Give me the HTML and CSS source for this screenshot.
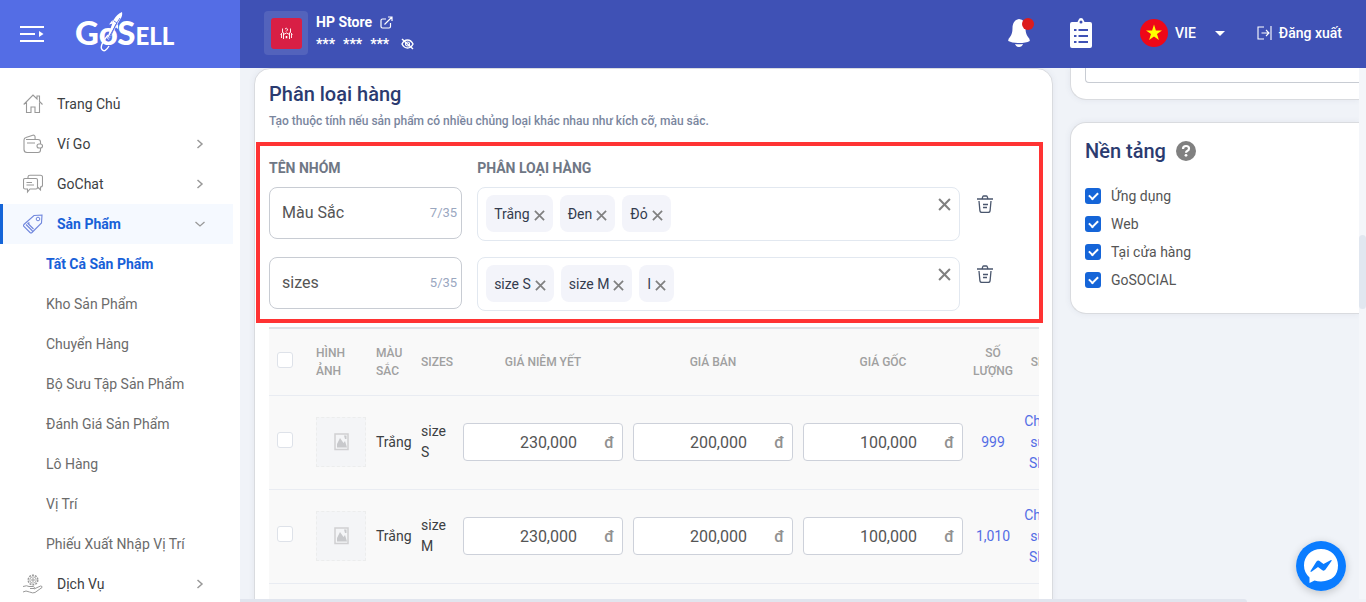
FILE: index.html
```html
<!DOCTYPE html>
<html lang="vi">
<head>
<meta charset="utf-8">
<title>GoSell</title>
<link rel="stylesheet" href="styles.css">
</head>
<body>
<svg class="defs" aria-hidden="true">
  <symbol id="x" viewBox="0 0 12 12"><path d="M1 1l10 10M11 1L1 11" fill="none" stroke="#808080" stroke-width="1.900"/></symbol>
  <symbol id="trash" viewBox="0 0 16 18"><path d="M0 4h16M5 4l.8-2.400Q6 1 6.800 1h2.400q.8 0 1 .6L11 4M2 6l.9 9.600Q3 17.500 5 17.500h6q2 0 2.100-1.900L14 6M6 9.500h5M6 12.500h4" fill="none" stroke="#4a566d" stroke-width="1.300"/></symbol>
  <symbol id="right" viewBox="0 0 12 12"><path d="M3.500 2l4.500 4-4.500 4" fill="none" stroke="#999" stroke-width="1.500"/></symbol>
  <symbol id="picture" viewBox="0 0 15 18"><rect x="1" y="1" width="13" height="15.500" fill="none" stroke="#d0d0d2" stroke-width="1.500"/><path d="M3 14.500V11l3-6 3.500 5 1.500-2L13 14.500z" fill="#c8c9cc"/><path d="M10 2.500h2.500v3.500H11z" fill="#c8c9cc"/></symbol>
</svg>

<header class="header">
  <div class="brand">
    <button class="plain" aria-label="Menu">
      <svg width="24" height="18" viewBox="0 0 24 18"><path d="M0 2h24M0 9h15M0 16h24" stroke="#fff" stroke-width="2"/><path d="M19 6v6l4.500-3z" fill="#fff"/></svg>
    </button>
    <a class="logo" href="#"><span class="logo-big">GoS</span><span class="logo-small">ELL</span>
      <svg class="rocket" width="26" height="42" viewBox="0 0 26 42"><path d="M23 0q1 4-2.500 8.500L10 28l-2-1.500L14.500 8Q18 2 23 0z" fill="#fff"/><path d="M21 6l-4.500 7-6.500 15M15 9l3 2-9 16" fill="none" stroke="#546de5" stroke-width=".9"/><path d="M13.500 8l-3.500 4.500 4-1zM19 12l0 5-2.500-2z" fill="#fff"/><path d="M9 23Q0 34 3 37.500 6 41 10 34" fill="none" stroke="#fff" stroke-width="1.400"/></svg>
    </a>
  </div>
  <div class="bar">
    <div class="store">
      <span class="store-logo"><svg width="31" height="31" viewBox="0 0 31 31"><rect width="31" height="31" rx="3" fill="#d81f45"/><g fill="none" stroke="#fff" stroke-width=".9"><path d="M11.500 10.500v4l-2 2M12.500 14.500v6.500M18.500 14.500v6.500M19.500 10.500v4l2 2M10.500 16v4M20.500 16v4M12.500 16.500q3-3 6 0M14 11q1.500-1.500 2.500 0 0 1.500-1.500 2.500"/></g><path d="M14.700 18h1.600v2.300h-1.600z" fill="#fff"/></svg></span>
      <div class="store-text">
        <a class="store-name" href="#">HP Store <svg width="13" height="13" viewBox="0 0 13 13"><path d="M6 3H2.500Q1 3 1 4.500v6Q1 12 2.500 12h6.500q1.500 0 1.500-1.500V7M4.500 8.500L12 1M8 1h4v4" fill="none" stroke="#fff" stroke-width="1.200"/></svg></a>
        <div class="balance"><span>***</span><span>***</span><span>***</span>
          <button class="plain eye" aria-label="Hiện số dư"><svg width="13" height="12" viewBox="0 0 13 12"><path d="M1 6q2-4 5.500-4T12 6q-2 4-5.500 4T1 6z" fill="none" stroke="#fff" stroke-width="1.400"/><circle cx="6.500" cy="6" r="2" fill="none" stroke="#fff" stroke-width="1.200"/><path d="M1 1l11 10" stroke="#fff" stroke-width="1.400"/></svg></button></div>
      </div>
    </div>
    <nav class="tools">
      <button class="plain" aria-label="Thông báo"><svg width="26" height="30" viewBox="0 0 26 30"><path d="M11 1C7 1.500 4.500 5 4.500 10q0 6-2.500 9-2 2-1.800 4Q4 25 11 25t10.800-2q.2-2-1.800-4-2.500-3-2.500-9Q17.500 1.500 11 1z" fill="#fff"/><path d="M7 26q4 .6 8 0-1 3-4 3t-4-3z" fill="#fff"/><circle cx="20" cy="6" r="6" fill="#dc1c1c"/></svg></button>
      <button class="plain" aria-label="Danh sách"><svg width="22" height="30" viewBox="0 0 22 30"><path d="M2 4h5.500q.5-1 1-2 .5-2 2.500-2t2.500 2q.5 1 1 2H20q2 0 2 2v22q0 2-2 2H2q-2 0-2-2V6q0-2 2-2z" fill="#fff"/><circle cx="11" cy="4" r="1.500" fill="#3f51b5"/><path d="M4 12h2.500M4 18h2.500M4 24h2.500M8.500 12H18M8.500 18H18M8.500 24H18" stroke="#3f51b5" stroke-width="2"/></svg></button>
      <button class="plain language"><svg width="28" height="28" viewBox="0 0 28 28"><circle cx="14" cy="14" r="14" fill="#ee0818"/><path d="M14 5.500l1.900 6h6.100l-5 3.600 1.900 5.900-4.900-3.600-4.900 3.600 1.900-5.900-5-3.600h6.100z" fill="#ff0"/></svg><span>VIE</span><svg class="caret" width="10" height="5" viewBox="0 0 10 5"><path d="M0 0h10L5 5z" fill="#fff"/></svg></button>
      <a class="logout" href="#"><svg width="15" height="14" viewBox="0 0 15 14"><path d="M7 1H1v12h6M14 0v14M4.500 7h7M9 4l3 3-3 3" fill="none" stroke="#fff" stroke-width="1.100"/></svg>Đăng xuất</a>
    </nav>
  </div>
</header>

<div class="page">
  <nav class="sidebar">
    <a class="item" href="#"><svg class="icon" viewBox="0 0 20 20"><path d="M.7 10.500L10 1l4 4V2h2.500v5.500l3 3M3.500 8.500V18.500h4.500V13h4v5.500h4.500V8.500" fill="none" stroke="#999" stroke-width="1.100"/></svg>Trang Chủ</a>
    <a class="item" href="#"><svg class="icon" viewBox="0 0 20 20"><path d="M3 5.500h12q2.500 0 2.500 2.500v2M17.500 14v2q0 2.500-2.500 2.500H4Q1 18.500 1 15.500V6q0-2 2-2.500L10.500 1q2 0 1.500 4.500M4 9h8M16 10h1.500q2 0 2 2t-2 2H16q-2 0-2-2t2-2z" fill="none" stroke="#999" stroke-width="1.100"/></svg>Ví Go<svg class="arrow"><use href="#right"/></svg></a>
    <a class="item" href="#"><svg class="icon" viewBox="0 0 20 20"><path d="M5 4V3q0-1.800 2-1.800h10.500q2 0 2 1.800v8q0 2-2 2v3l-3-3M2 4.500h11q1.500 0 1.500 1.500v7.500q0 1.500-1.500 1.500H7l-2.500 3V15H2Q.5 15 .5 13.500V6Q.5 4.500 2 4.500zM3.500 8.500H9M3.500 11H11" fill="none" stroke="#999" stroke-width="1.100"/></svg>GoChat<svg class="arrow"><use href="#right"/></svg></a>
    <a class="item current" href="#"><svg class="icon" viewBox="0 0 20 20"><path d="M11 1.500L19 1l-.5 8-9.500 9.500q-1 .8-2 0L.9 12.500q-.8-1 0-2zM3 10.500l6.500 6.500M4.500 9l6 6M5.500 8.300l1 1" fill="none" stroke="#6f86dd" stroke-width="1.100"/><circle cx="15" cy="5" r="1.800" fill="none" stroke="#6f86dd"/></svg>Sản Phẩm<svg class="arrow" viewBox="0 0 12 12"><path d="M1.500 4L6 8l4.500-4" fill="none" stroke="#999" stroke-width="1.300"/></svg></a>
    <a class="sub chosen" href="#">Tất Cả Sản Phẩm</a>
    <a class="sub" href="#">Kho Sản Phẩm</a>
    <a class="sub" href="#">Chuyển Hàng</a>
    <a class="sub" href="#">Bộ Sưu Tập Sản Phẩm</a>
    <a class="sub" href="#">Đánh Giá Sản Phẩm</a>
    <a class="sub" href="#">Lô Hàng</a>
    <a class="sub" href="#">Vị Trí</a>
    <a class="sub" href="#">Phiếu Xuất Nhập Vị Trí</a>
    <a class="item" href="#"><svg class="icon" viewBox="0 0 20 20"><g fill="none" stroke="#999"><circle cx="10" cy="6" r="4.800" stroke-width="1.400" stroke-dasharray="2 1"/><circle cx="10" cy="6" r="3.200" stroke-width=".8"/><circle cx="10" cy="6" r="1.200"/><path d="M0 12.500q4-1.500 6 0h4.500q1.500.5.500 2H7M11 15l6.500-3q2 0 1.500 1.500L12 18.500q-2 1-5.500-.5L3 17l-3 1"/></g></svg>Dịch Vụ<svg class="arrow"><use href="#right"/></svg></a>
  </nav>

  <main class="content">
    <div class="columns">
      <section class="card variations">
        <h2>Phân loại hàng</h2>
        <p class="hint">Tạo thuộc tính nếu sản phẩm có nhiều chủng loại khác nhau như kích cỡ, màu sắc.</p>
        <div class="groups">
          <span class="group-label">TÊN NHÓM</span><span class="group-label wide">PHÂN LOẠI HÀNG</span>
          <label class="name"><input type="text" value="Màu Sắc" aria-label="Tên nhóm 1"><span>7/35</span></label>
          <div class="tags">
            <span class="tag">Trắng<button class="plain" aria-label="Xóa Trắng"><svg><use href="#x"/></svg></button></span>
            <span class="tag">Đen<button class="plain" aria-label="Xóa Đen"><svg><use href="#x"/></svg></button></span>
            <span class="tag">Đỏ<button class="plain" aria-label="Xóa Đỏ"><svg><use href="#x"/></svg></button></span>
            <button class="plain clear" aria-label="Xóa tất cả"><svg><use href="#x"/></svg></button>
          </div>
          <button class="plain trash" aria-label="Xóa nhóm 1"><svg><use href="#trash"/></svg></button>
          <label class="name"><input type="text" value="sizes" aria-label="Tên nhóm 2"><span>5/35</span></label>
          <div class="tags">
            <span class="tag">size S<button class="plain" aria-label="Xóa size S"><svg><use href="#x"/></svg></button></span>
            <span class="tag">size M<button class="plain" aria-label="Xóa size M"><svg><use href="#x"/></svg></button></span>
            <span class="tag">l<button class="plain" aria-label="Xóa l"><svg><use href="#x"/></svg></button></span>
            <button class="plain clear" aria-label="Xóa tất cả"><svg><use href="#x"/></svg></button>
          </div>
          <button class="plain trash" aria-label="Xóa nhóm 2"><svg><use href="#trash"/></svg></button>
        </div>
        <div class="table-wrap">
          <table>
            <colgroup><col class="c-check"><col class="c-image"><col class="c-color"><col class="c-size"><col class="c-price"><col class="c-price"><col class="c-price"><col class="c-qty"><col class="c-sku"></colgroup>
            <thead><tr>
              <th><input type="checkbox" aria-label="Chọn tất cả"></th><th class="left">HÌNH ẢNH</th><th class="left">MÀU SẮC</th><th class="left">SIZES</th><th>GIÁ NIÊM YẾT</th><th>GIÁ BÁN</th><th>GIÁ GỐC</th><th>SỐ LƯỢNG</th><th>SKU</th>
            </tr></thead>
            <tbody>
              <tr>
                <td><input type="checkbox" aria-label="Chọn Trắng size S"></td>
                <td><span class="thumb"><svg><use href="#picture"/></svg></span></td>
                <td class="left">Trắng</td><td class="left">size S</td>
                <td><label class="price"><input type="text" value="230,000" aria-label="Giá niêm yết"><span>đ</span></label></td>
                <td><label class="price"><input type="text" value="200,000" aria-label="Giá bán"><span>đ</span></label></td>
                <td><label class="price"><input type="text" value="100,000" aria-label="Giá gốc"><span>đ</span></label></td>
                <td><a href="#">999</a></td><td><a href="#">Chỉnh sửa SKU</a></td>
              </tr>
              <tr>
                <td><input type="checkbox" aria-label="Chọn Trắng size M"></td>
                <td><span class="thumb"><svg><use href="#picture"/></svg></span></td>
                <td class="left">Trắng</td><td class="left">size M</td>
                <td><label class="price"><input type="text" value="230,000" aria-label="Giá niêm yết"><span>đ</span></label></td>
                <td><label class="price"><input type="text" value="200,000" aria-label="Giá bán"><span>đ</span></label></td>
                <td><label class="price"><input type="text" value="100,000" aria-label="Giá gốc"><span>đ</span></label></td>
                <td><a href="#">1,010</a></td><td><a href="#">Chỉnh sửa SKU</a></td>
              </tr>
              <tr><td colspan="9"></td></tr>
            </tbody>
          </table>
        </div>
      </section>

      <aside class="side">
        <section class="card seo"><textarea aria-label="Mô tả"></textarea></section>
        <section class="card platforms">
          <h2>Nền tảng <svg width="20" height="20" viewBox="0 0 20 20"><circle cx="10" cy="10" r="10" fill="#808080"/><path d="M7 8q0-3 3-3t3 2.500q0 1.500-1.500 2.200-1.500.6-1.500 2" fill="none" stroke="#fff" stroke-width="2.200"/><circle cx="10" cy="14.300" r="1.400" fill="#fff"/></svg></h2>
          <label><input type="checkbox" checked>Ứng dụng</label>
          <label><input type="checkbox" checked>Web</label>
          <label><input type="checkbox" checked>Tại cửa hàng</label>
          <label><input type="checkbox" checked>GoSOCIAL</label>
        </section>
      </aside>
    </div>
    <div class="scroll-v"><i></i></div>
    <div class="scroll-h"><i></i></div>
  </main>
</div>

<button class="plain messenger" aria-label="Messenger"><svg width="50" height="50" viewBox="0 0 50 50"><circle cx="25" cy="25" r="25" fill="#0a7cff"/><path d="M25 8C15 8 8 15.200 8 24.500q0 7 5.500 12V42l5-2.500q3 1 6.500 1 17-1 17-16.200C42 15.200 35 8 25 8z" fill="#fff"/><path d="M14.500 30l6-9.500q1.500-1.500 3-.5l4 3 7.500-4q1.200-.2.500 1l-6 8.500q-1.500 2-3.500.5l-4-3-6.500 4.700q-1.400.5-1-.7z" fill="#0a7cff"/></svg></button>
</body>
</html>
```
FILE: styles.css
```css
* { box-sizing: border-box; }
body {
  margin: 0;
  height: 100vh;
  overflow: hidden;
  display: flex;
  flex-direction: column;
  font: 14px/20px Roboto, "Liberation Sans", sans-serif;
  color: #3c4043;
}
a { color: inherit; text-decoration: none; }
input, textarea { font: inherit; color: inherit; }
h2, p { margin: 0; }
svg { display: block; flex: none; }
.defs { position: absolute; width: 0; height: 0; }
.plain { display: block; border: 0; padding: 0; background: none; font: inherit; color: inherit; cursor: pointer; }

.header { display: flex; flex: none; height: 68px; color: #fff; }
.brand { width: 240px; flex: none; display: flex; align-items: center; gap: 31px; padding-left: 20px; background: #546de5; }
.logo { position: relative; display: flex; align-items: baseline; font-family: Lato, sans-serif; font-weight: 900; line-height: 40px; }
.logo-big { font-size: 33px; }
.logo-small { font-size: 24px; }
.rocket { position: absolute; left: 24px; top: 0; }
.bar { flex: 1; display: flex; align-items: center; justify-content: space-between; padding: 0 24px 2px; background: #3f51b5; }
.store { display: flex; gap: 8px; }
.store-logo { width: 44px; height: 44px; display: grid; place-items: center; border-radius: 4px; background: #5363bc; }
.store-text { display: flex; flex-direction: column; gap: 2px; padding-top: 1px; }
.store-name, .balance { display: flex; align-items: center; gap: 8px; font-weight: 700; }
.eye { margin-left: 4px; }
.tools { display: flex; align-items: center; font-weight: 500; }
.tools > button:first-child { margin-right: 36px; }
.language { display: flex; align-items: center; gap: 7px; margin: 0 32px 0 48px; }
.caret { margin-left: 12px; }
.logout { display: flex; align-items: center; gap: 7px; }

.page { flex: 1; min-height: 0; display: flex; }
.sidebar { width: 240px; flex: none; padding: 16px 7px 0 0; overflow: hidden; background: #fff; }
.item, .sub { display: flex; align-items: center; height: 40px; }
.item { padding: 0 27px 0 23px; gap: 14px; }
.icon { width: 20px; height: 20px; }
.arrow { width: 12px; height: 12px; margin-left: auto; }
.sub { padding-left: 46px; color: #6b6b6b; }
.item.current, .sub.chosen { color: #1760d8; font-weight: 700; }
.item.current { padding-left: 20px; border-left: 3px solid #1565d8; background: #f5f9ff; }

.content { flex: 1; min-width: 0; display: grid; grid-template-columns: minmax(0, 1fr) 7px; grid-template-rows: minmax(0, 1fr) 3px; background: #f0f3f8; }
.columns { display: grid; grid-template-columns: minmax(0, 1fr) 289px; align-items: start; gap: 17px; padding-left: 14px; overflow: hidden; }
.card { border: 1px solid #d9dbdf; border-radius: 16px; padding: 13px; background: #fff; box-shadow: 0 0 6px rgba(60, 80, 120, .08); }
h2 { display: flex; align-items: center; gap: 10px; font-size: 20px; line-height: 26px; font-weight: 500; color: #2b3b70; }
.hint { margin-top: 4px; font-size: 12px; font-weight: 500; line-height: 20px; color: #7a869e; }
.variations { padding: 12px 13px 13px 14px; }
.groups {
  display: grid;
  grid-template-columns: minmax(0, 2fr) minmax(0, 5fr) 64px;
  gap: 16px 15px;
  margin: 11px -4px 4px -13px;
  padding: 12px 0 8px 9px;
  border: 4px solid #f33;
}
.group-label { margin-bottom: -7px; font-weight: 700; color: #6f7785; }
.wide { grid-column: span 2; }
.name { display: flex; align-items: center; height: 52px; padding: 0 4px 0 12px; border: 1px solid #c8ccd3; border-radius: 8px; font-size: 16px; color: #555; }
.name input, .price input { flex: 1; min-width: 0; width: 0; border: 0; padding: 0; background: none; }
.name span { font-size: 13px; color: #9aa7bf; }
.tags { display: flex; align-items: flex-start; gap: 7px; padding: 7px 8px; height: 54px; border: 1px solid #e2e8f0; border-radius: 8px; }
.tag { display: flex; align-items: center; gap: 4px; height: 37px; padding: 0 8px; border-radius: 8px; background: #f3f4fa; color: #333c4e; }
.tag svg { width: 11px; height: 11px; margin-top: 3px; }
.clear { margin: 3px 0 0 auto; }
.clear svg { width: 13px; height: 13px; }
.trash { align-self: start; margin: 8px 0 0 2px; }
.trash svg { width: 16px; height: 18px; }

.table-wrap { overflow: hidden; }
table { width: 797px; table-layout: fixed; border-collapse: separate; border-spacing: 0; border-top: 2px solid #dee2e6; background: #f9f9f9; }
.c-check { width: 42px; } .c-image { width: 60px; } .c-color { width: 45px; } .c-size { width: 42px; }
.c-price { width: 170px; } .c-qty { width: 50px; } .c-sku { width: 48px; }
th, td { padding: 0 5px; border-bottom: 1px solid #e9ecf2; text-align: center; }
th { height: 67px; font-size: 12px; line-height: 18px; font-weight: 500; color: #a0a0a0; }
th:nth-child(8) { padding: 0; }
td { height: 94px; padding-bottom: 1px; line-height: 21px; }
.left { text-align: left; }
td a { color: #546de5; }
th:first-child, td:first-child { padding: 0 18px 4px 8px; }
td:first-child { padding-bottom: 5px; }
input[type=checkbox] { appearance: none; display: block; width: 16px; height: 16px; margin: 0; border: 1px solid #dee2e9; border-radius: 3px; background: #fff; }
.thumb { display: grid; place-items: center; width: 50px; height: 50px; border: 1px dashed #eceded; background: #f4f5f7; }
.thumb svg { width: 15px; height: 18px; }
.price { display: flex; align-items: center; height: 38px; padding: 0 8px; border: 1px solid #cdd1da; border-radius: 4px; background: #fff; font-size: 16px; color: #555; }
.price input { text-align: right; }
.price span { width: 37px; text-align: right; font-weight: 500; color: #919191; }

.side { display: grid; gap: 22px; }
.side .card { border-right: 0; border-radius: 16px 0 0 16px; }
.side .seo { border-top: 0; border-radius: 0 0 0 16px; padding: 0 0 16px 14px; }
textarea { display: block; width: 100%; height: 15px; padding: 0; resize: none; overflow: hidden; border: solid #c8ccd3; border-width: 0 0 1px 1px; border-radius: 0 0 0 4px; }
.platforms { padding: 15px 14px 19px; }
.platforms h2 { margin-bottom: 18px; }
.platforms label { display: flex; align-items: center; gap: 10px; height: 28px; color: #555; }
.platforms input[type=checkbox] { border: 0; background: #1565d8; display: grid; place-items: center; }
.platforms input::after { content: ""; width: 7px; height: 4px; margin-bottom: 2px; border: solid #fff; border-width: 0 0 2px 2px; transform: rotate(-45deg); }

.scroll-v { display: flex; flex-direction: column; background: #f4f6fa; }
.scroll-v i { height: 74px; margin-top: 167px; border-radius: 4px; background: #e1e7f0; }
.scroll-h { display: flex; }
.scroll-h i { width: 90%; border-radius: 0 4px 0 0; background: #e1e5ee; }
.messenger { position: fixed; right: 20px; bottom: 11px; border-radius: 50%; box-shadow: 0 2px 8px rgba(0, 0, 0, .2); }
```
